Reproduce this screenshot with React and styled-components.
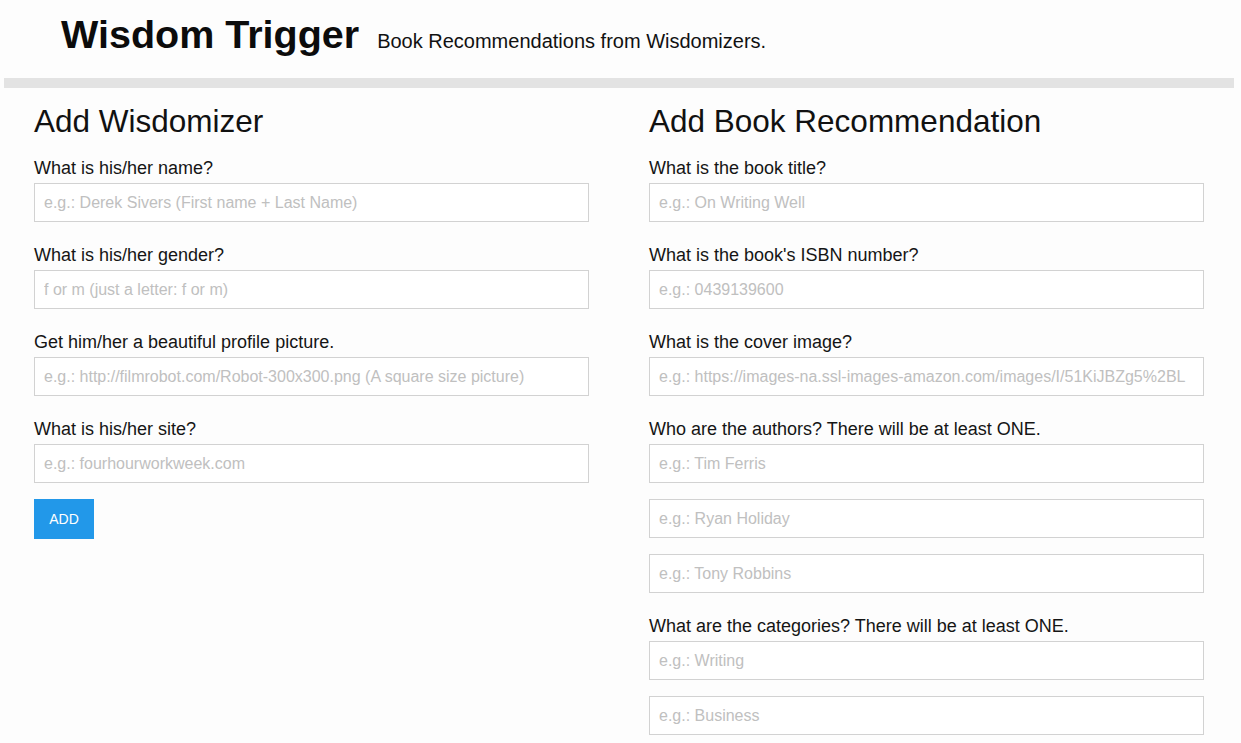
import styled, { createGlobalStyle } from "styled-components";

const GlobalStyle = createGlobalStyle`
  html,
  body {
    margin: 0;
    padding: 0;
    background: #fdfdfd;
    color: #151515;
    font-family: "Liberation Sans", Arial, Helvetica, sans-serif;
  }

  * {
    box-sizing: border-box;
  }
`;

const StyledHeader = styled.header`
  height: 78px;
  padding: 12px 0 0 61px;
  display: flex;
  align-items: baseline;
  gap: 18px;
`;

const StyledTitle = styled.h1`
  margin: 0;
  font-size: 39.5px;
  line-height: 45px;
  font-weight: 700;
  color: #0c0c0c;
`;

const StyledTagline = styled.span`
  font-size: 20px;
  line-height: 24px;
  color: #111;
`;

const StyledDivider = styled.div`
  height: 10px;
  margin: 0 7px 0 4px;
  background: #e3e3e3;
`;

const StyledMain = styled.main`
  display: grid;
  grid-template-columns: 555px 555px;
  column-gap: 60px;
  padding: 14px 0 0 34px;
`;

const StyledSection = styled.section`
  display: flex;
  flex-direction: column;
`;

const StyledHeading = styled.h2`
  margin: 1px 0 17px;
  font-size: 31.5px;
  line-height: 36px;
  font-weight: 400;
  color: #111;
`;

const StyledField = styled.div`
  display: flex;
  flex-direction: column;
  gap: 16px;
  margin-bottom: 21px;

  label {
    padding-top: 2px;
    font-size: 18px;
    line-height: 20px;
    margin-bottom: -11px;
  }
`;

const StyledInput = styled.input`
  width: 100%;
  height: 39px;
  padding: 1px 9px 0;
  border: 1px solid #d2d2d2;
  background: #fff;
  font-family: "Liberation Sans", Arial, Helvetica, sans-serif;
  font-size: 16px;
  color: #333;
  outline: none;

  &::placeholder {
    color: #c0c0c0;
  }
`;

const StyledButton = styled.button`
  align-self: flex-start;
  width: 60px;
  height: 40px;
  margin-top: -5px;
  border: none;
  background: #2298e9;
  color: #fff;
  font-family: "Liberation Sans", Arial, Helvetica, sans-serif;
  font-size: 14px;
  cursor: pointer;
`;

function Field({ label, placeholders }) {
  return (
    <StyledField>
      <label>{label}</label>
      {placeholders.map((p) => (
        <StyledInput key={p} placeholder={p} />
      ))}
    </StyledField>
  );
}

const wisdomizerFields = [
  { label: "What is his/her name?", placeholders: ["e.g.: Derek Sivers (First name + Last Name)"] },
  { label: "What is his/her gender?", placeholders: ["f or m (just a letter: f or m)"] },
  {
    label: "Get him/her a beautiful profile picture.",
    placeholders: ["e.g.: http://filmrobot.com/Robot-300x300.png (A square size picture)"],
  },
  { label: "What is his/her site?", placeholders: ["e.g.: fourhourworkweek.com"] },
];

const bookFields = [
  { label: "What is the book title?", placeholders: ["e.g.: On Writing Well"] },
  { label: "What is the book's ISBN number?", placeholders: ["e.g.: 0439139600"] },
  {
    label: "What is the cover image?",
    placeholders: ["e.g.: https://images-na.ssl-images-amazon.com/images/I/51KiJBZg5%2BL"],
  },
  {
    label: "Who are the authors? There will be at least ONE.",
    placeholders: ["e.g.: Tim Ferris", "e.g.: Ryan Holiday", "e.g.: Tony Robbins"],
  },
  {
    label: "What are the categories? There will be at least ONE.",
    placeholders: ["e.g.: Writing", "e.g.: Business"],
  },
];

export default function App() {
  return (
    <>
      <GlobalStyle />
      <StyledHeader>
        <StyledTitle>Wisdom Trigger</StyledTitle>
        <StyledTagline>Book Recommendations from Wisdomizers.</StyledTagline>
      </StyledHeader>
      <StyledDivider />
      <StyledMain>
        <StyledSection>
          <StyledHeading>Add Wisdomizer</StyledHeading>
          {wisdomizerFields.map((f) => (
            <Field key={f.label} {...f} />
          ))}
          <StyledButton>ADD</StyledButton>
        </StyledSection>
        <StyledSection>
          <StyledHeading>Add Book Recommendation</StyledHeading>
          {bookFields.map((f) => (
            <Field key={f.label} {...f} />
          ))}
        </StyledSection>
      </StyledMain>
    </>
  );
}
